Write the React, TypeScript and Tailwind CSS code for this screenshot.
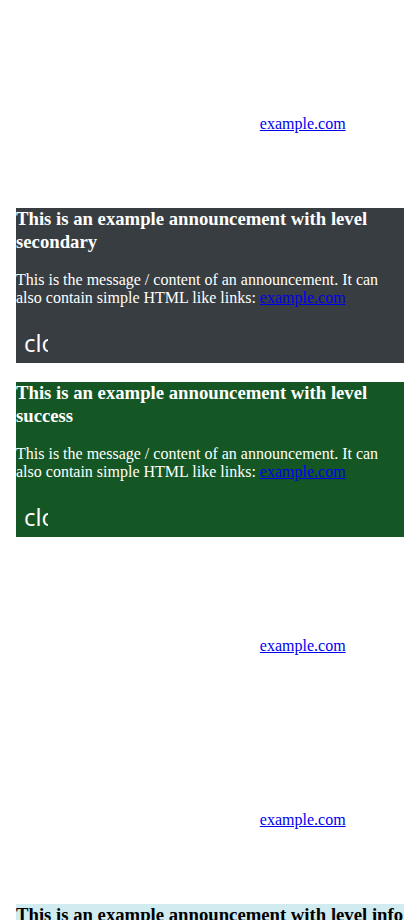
const announcements = [
    { level: "primary", box: "bg-white text-white" },
    { level: "secondary", box: "bg-[#383d41] text-white" },
    { level: "success", box: "bg-[#155724] text-white" },
    { level: "danger", box: "bg-white text-white" },
    { level: "warning", box: "bg-white text-white" },
    { level: "info", box: "bg-[#d1ecf1] text-black" },
];

function Announcement({ level, box }: { level: string; box: string }) {
    return (
        <div className={`w-full ${box}`}>
            <h3 className="text-[18.72px] leading-[22.5px] font-bold font-['Liberation_Serif',serif]">
                This is an example announcement with level {level}
            </h3>
            <p className="mt-[18px] text-[16px] leading-[18px] font-['Liberation_Serif',serif]">
                This is the message / content of an announcement. It can also contain simple HTML like links:{" "}
                <a href="#" className="text-[#0000ee] underline">example.com</a>
            </p>
            <button className="mt-4 h-10 w-8 overflow-hidden whitespace-nowrap pl-2 text-left text-[24px] leading-[40px] font-['Open_Sans',sans-serif]">
                close
            </button>
        </div>
    );
}

export default function App() {
    return (
        <div className="min-h-screen bg-white px-4 pt-[34px] pb-8 flex flex-col gap-[19px]">
            {announcements.map((a) => (
                <Announcement key={a.level} level={a.level} box={a.box} />
            ))}
        </div>
    );
}
